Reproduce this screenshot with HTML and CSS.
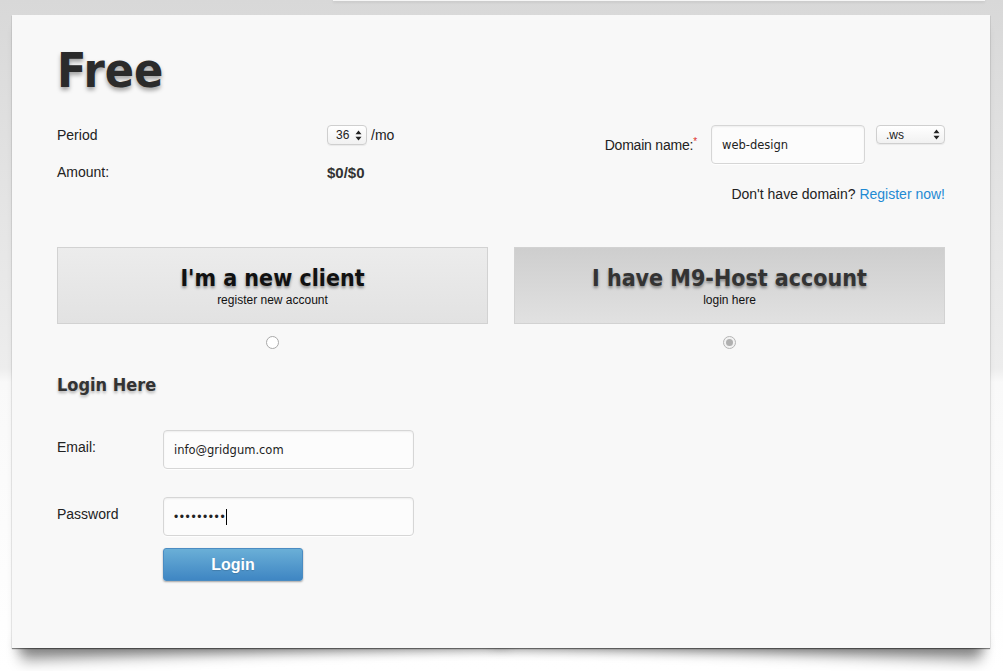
FILE: index.html
```html
<!DOCTYPE html>
<html>
<head>
<meta charset="utf-8">
<link rel="stylesheet" href="styles.css">
</head>
<body>
<div class="topstrip"></div>
<div class="panel">
  <h1 class="title">Free</h1>
  <div class="top">
    <div class="plan">
      <div class="plan-row">
        <span class="plan-label">Period</span>
        <span class="plan-value">
          <span class="sel sel-period"><span class="sel-text">36</span>
            <svg class="arrows" width="7" height="11" viewBox="0 0 7 11"><path d="M3.5 0.5 L6.5 4.2 H0.5 Z M3.5 10.5 L6.5 6.8 H0.5 Z" fill="#222"/></svg>
          </span>
          <span class="mo">/mo</span>
        </span>
      </div>
      <div class="plan-row">
        <span class="plan-label">Amount:</span>
        <span class="plan-value amount">$0/$0</span>
      </div>
    </div>
    <div class="domain">
      <div class="domain-row">
        <label class="domain-label">Domain name:<span class="req">*</span></label>
        <div class="field domain-input">web-design</div>
        <span class="sel sel-tld"><span class="sel-text">.ws</span>
          <svg class="arrows" width="7" height="11" viewBox="0 0 7 11"><path d="M3.5 0.5 L6.5 4.2 H0.5 Z M3.5 10.5 L6.5 6.8 H0.5 Z" fill="#222"/></svg>
        </span>
      </div>
      <div class="register">Don't have domain? <a class="link">Register now!</a></div>
    </div>
  </div>

  <div class="options">
    <div class="option">
      <div class="option-box">
        <div class="option-title">I'm a new client</div>
        <div class="option-sub">register new account</div>
      </div>
      <span class="radio"></span>
    </div>
    <div class="option">
      <div class="option-box selected">
        <div class="option-title">I have M9-Host account</div>
        <div class="option-sub">login here</div>
      </div>
      <span class="radio checked"></span>
    </div>
  </div>

  <h2 class="login-title">Login Here</h2>
  <div class="form-row row-email">
    <span class="form-label">Email:</span>
    <div class="field login-field">info@gridgum.com</div>
  </div>
  <div class="form-row">
    <span class="form-label">Password</span>
    <div class="field login-field"><span class="dots">•••••••••</span><span class="caret"></span></div>
  </div>
  <div class="form-row btn-row">
    <span class="form-label"></span>
    <button class="btn">Login</button>
  </div>
</div>
</body>
</html>
```
FILE: styles.css
```css
html {
  min-height: 100%;
  background: linear-gradient(to bottom, #d8d8d8 0px, #e4e4e4 200px, #ededed 368px, #f9f9f9 382px, #ffffff 671px);
}
body {
  margin: 0;
  font-family: "Liberation Sans", Arial, sans-serif;
  font-size: 14px;
  color: #222;
  overflow: hidden;
  height: 671px;
}
.topstrip {
  margin-left: 333px;
  width: 652px;
  height: 1px;
  background: #f6f6f6;
  box-shadow: 0 1px 3px rgba(0,0,0,0.18);
}
.panel {
  position: relative;
  margin: 14px 0 0 12px;
  width: 978px;
  box-sizing: border-box;
  padding: 31px 45px 67px;
  background: #f8f8f8;
  box-shadow: 0 1px 1px rgba(0,0,0,0.45), 0 8px 10px -6px rgba(0,0,0,0.3);
}
.panel::before,
.panel::after {
  content: "";
  position: absolute;
  z-index: -1;
  bottom: 18px;
  width: 50%;
  height: 20px;
  box-shadow: 0 22px 14px rgba(0,0,0,0.4);
}
.panel::before {
  left: 8px;
  transform: rotate(-2deg);
}
.panel::after {
  right: 8px;
  transform: rotate(2deg);
}
.title {
  margin: 0 0 31px;
  font-family: "DejaVu Sans", sans-serif;
  font-stretch: condensed;
  font-weight: bold;
  font-size: 48px;
  line-height: 48px;
  color: #2b2b2b;
  text-shadow: 0 3px 4px rgba(0,0,0,0.35);
}
.top {
  display: flex;
  justify-content: space-between;
  align-items: flex-start;
}
.plan {
  display: flex;
  flex-direction: column;
  gap: 17px;
}
.plan-row {
  display: flex;
  align-items: center;
  height: 20px;
}
.plan-label {
  width: 270px;
}
.plan-value {
  display: flex;
  align-items: center;
}
.amount {
  font-weight: bold;
  font-size: 15px;
  color: #333;
}
.mo {
  margin-left: 4px;
}
.sel {
  display: inline-flex;
  align-items: center;
  justify-content: space-between;
  box-sizing: border-box;
  border: 1px solid #cfcfcf;
  border-radius: 4px;
  background: linear-gradient(#ffffff, #f1f1f1);
  box-shadow: 0 1px 1px rgba(0,0,0,0.06);
  font-size: 12px;
  color: #222;
}
.sel-period {
  width: 40px;
  height: 20px;
  padding: 0 4px 0 8px;
}
.sel-tld {
  width: 69px;
  height: 19px;
  padding: 0 4px 0 9px;
  margin-left: 11px;
  align-self: flex-start;
}
.arrows {
  display: block;
}
.domain {
  display: flex;
  flex-direction: column;
  align-items: flex-end;
}
.domain-row {
  display: flex;
  align-items: center;
}
.domain-label {
  margin-right: 14px;
  padding-top: 1px;
  letter-spacing: -0.2px;
}
.req {
  color: #e0302a;
  font-size: 10px;
  vertical-align: top;
  position: relative;
  top: -1px;
}
.field {
  box-sizing: border-box;
  display: flex;
  align-items: center;
  background: #fcfcfc;
  border: 1px solid #d6d6d6;
  border-radius: 4px;
  box-shadow: inset 0 1px 2px rgba(0,0,0,0.06), 0 1px 0 rgba(255,255,255,0.8);
  font-family: "DejaVu Sans", sans-serif;
  font-size: 11.5px;
  color: #222;
  padding-left: 10px;
}
.domain-input {
  width: 154px;
  height: 39px;
}
.register {
  margin-top: 22px;
  line-height: 16px;
}
.link {
  color: #1f8ad3;
  text-decoration: none;
}
.options {
  display: flex;
  gap: 26px;
  margin-top: 45px;
}
.option {
  flex: 1;
  display: flex;
  flex-direction: column;
  align-items: center;
}
.option-box {
  align-self: stretch;
  box-sizing: border-box;
  height: 77px;
  border: 1px solid #d2d2d2;
  background: linear-gradient(#ececec, #e2e2e2);
  display: flex;
  flex-direction: column;
  align-items: center;
  justify-content: center;
}
.option-box.selected {
  background: linear-gradient(#cecece, #e1e1e1);
}
.option-title {
  font-family: "DejaVu Sans", sans-serif;
  font-stretch: condensed;
  font-weight: bold;
  font-size: 23px;
  line-height: 26px;
  color: #111;
  text-shadow: 0 2px 3px rgba(0,0,0,0.4);
}
.selected .option-title {
  color: #333;
}
.option-sub {
  margin-top: 2px;
  font-size: 12px;
  line-height: 14px;
  color: #111;
}
.radio {
  margin-top: 12px;
  width: 13px;
  height: 13px;
  box-sizing: border-box;
  border-radius: 50%;
  border: 1px solid #a9a9a9;
  background: #fff;
  display: flex;
  align-items: center;
  justify-content: center;
}
.radio.checked {
  border-color: #b5b5b5;
  background: #f2f2f2;
}
.radio.checked::after {
  content: "";
  width: 7px;
  height: 7px;
  border-radius: 50%;
  background: #b0b0b0;
}
.login-title {
  margin: 25px 0 34px;
  font-family: "DejaVu Sans", sans-serif;
  font-stretch: condensed;
  font-weight: bold;
  font-size: 18px;
  line-height: 22px;
  color: #333;
  text-shadow: 0 2px 3px rgba(0,0,0,0.3);
}
.form-row {
  display: flex;
  align-items: flex-start;
}
.row-email {
  margin-bottom: 28px;
}
.form-label {
  width: 106px;
  padding-top: 9px;
  line-height: 16px;
}
.login-field {
  width: 251px;
  height: 39px;
  font-size: 11.5px;
}
.dots {
  font-family: "Liberation Sans", sans-serif;
  font-size: 12px;
  letter-spacing: 1.6px;
}
.caret {
  width: 1px;
  height: 16px;
  background: #000;
}
.btn-row {
  margin-top: 12px;
}
.btn-row .form-label {
  padding: 0;
}
.btn {
  width: 140px;
  height: 33px;
  border: 1px solid #4b8cc2;
  border-radius: 3px;
  background: linear-gradient(#6aafd7, #3f86c3);
  box-shadow: 0 1px 2px rgba(0,0,0,0.35);
  color: #fff;
  font-family: "Liberation Sans", Arial, sans-serif;
  font-weight: bold;
  font-size: 16px;
  text-shadow: 0 1px 1px rgba(0,0,0,0.15);
  padding: 0;
}
```
